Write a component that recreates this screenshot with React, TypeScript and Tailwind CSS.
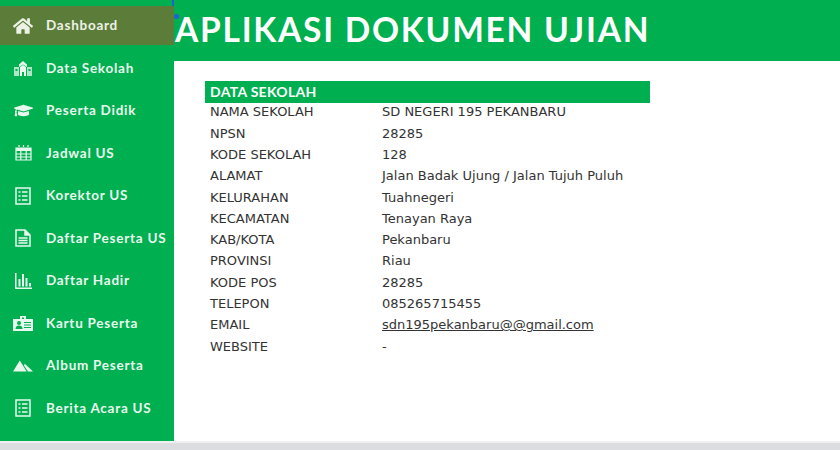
import React from "react";
import { FaHome, FaGraduationCap } from "react-icons/fa";

const ListIcon = ({ h = 18 }: { h?: number }) => (
  <svg width="16" height={h} viewBox={`0 0 16 ${h}`} fill="none" stroke="currentColor" strokeWidth="1.5">
    <rect x="1" y="1" width="14" height={h - 2} />
    <path d="M3.5 5h2M7 5h5.5M3.5 9h2M7 9h5.5M3.5 13h2M7 13h5.5" />
  </svg>
);

const SchoolIcon = () => (
  <svg width="18" height="15" viewBox="0 0 18 15" fill="currentColor">
    <path d="M9 0l4 3.5V6l-4-2.5L5 6V3.5z" />
    <path d="M6 6l3-2 3 2v9h-2v-4H8v4H6z" />
    <path d="M0 6h5v9H0zM13 6h5v9h-5z" opacity="0.75" />
    <path d="M1.5 8h2v2h-2zM14.5 8h2v2h-2z" fill="#00af50" />
  </svg>
);

const CalendarIcon = () => (
  <svg width="17" height="16" viewBox="0 0 17 16" fill="none" stroke="currentColor" strokeWidth="1.2">
    <path d="M1 3h15v12H1z" />
    <path d="M1 4.5h15" strokeWidth="3" />
    <path d="M4 0v2M8.500 0v2M13 0v2M1 9h15M1 12h15M5.800 6v9M11.200 6v9" />
  </svg>
);

const DocIcon = () => (
  <svg width="16" height="18" viewBox="0 0 16 18" fill="none" stroke="currentColor" strokeWidth="1.5">
    <path d="M1 1h9l5 5v11H1z" />
    <path d="M10 1v5h5" fill="currentColor" />
    <path d="M3.500 9h9M3.500 11.500h9M3.500 14h9" />
  </svg>
);

const BarsIcon = () => (
  <svg width="17" height="16" viewBox="0 0 17 16" fill="currentColor">
    <path d="M0 0h1.500v14.500H17V16H0z" />
    <path d="M3.500 6H5.500v7.500H3.500zM7 1h2v12.500H7zM10.500 5h2v8.500h-2zM14 10h2v3.500h-2z" />
  </svg>
);

const CardIcon = () => (
  <svg width="20" height="15" viewBox="0 0 20 15" fill="currentColor">
    <path d="M0 3h7V0h6v3h7v12H0z" />
    <path d="M9 1.500h2V3H9z" fill="#00af50" />
    <circle cx="6" cy="7" r="2" fill="#00af50" />
    <path d="M2.500 13c0-2.500 1.500-3.500 3.500-3.500s3.500 1 3.500 3.500z" fill="#00af50" />
    <path d="M11 6.500h7M11 9h7M11 11.500h7" stroke="#00af50" strokeWidth="1" />
  </svg>
);

const MountainIcon = () => (
  <svg width="22" height="12" viewBox="0 0 22 12" fill="currentColor">
    <path d="M0 12L7.500 0 15 12z" />
    <path d="M13 3.500L22 12h-5.500l-4.500-6.500z" />
  </svg>
);

const navItems = [
  { label: "Dashboard", icon: <FaHome size={20} />, active: true },
  { label: "Data Sekolah", icon: <SchoolIcon /> },
  { label: "Peserta Didik", icon: <FaGraduationCap size={19} /> },
  { label: "Jadwal US", icon: <CalendarIcon /> },
  { label: "Korektor US", icon: <ListIcon /> },
  { label: "Daftar Peserta US", icon: <DocIcon /> },
  { label: "Daftar Hadir", icon: <BarsIcon /> },
  { label: "Kartu Peserta", icon: <CardIcon /> },
  { label: "Album Peserta", icon: <MountainIcon /> },
  { label: "Berita Acara US", icon: <ListIcon h={18} /> },
];

const rows = [
  ["NAMA SEKOLAH", "SD NEGERI 195 PEKANBARU"],
  ["NPSN", "28285"],
  ["KODE SEKOLAH", "128"],
  ["ALAMAT", "Jalan Badak Ujung / Jalan Tujuh Puluh"],
  ["KELURAHAN", "Tuahnegeri"],
  ["KECAMATAN", "Tenayan Raya"],
  ["KAB/KOTA", "Pekanbaru"],
  ["PROVINSI", "Riau"],
  ["KODE POS", "28285"],
  ["TELEPON", "085265715455"],
  ["EMAIL", "sdn195pekanbaru@@gmail.com"],
  ["WEBSITE", "-"],
];

export default function App() {
  return (
    <div className="relative w-[840px] h-[450px] overflow-hidden flex flex-col bg-[#dcdde1] font-['Lato','Open_Sans',sans-serif]">
      <div className="flex h-[441px] shrink-0">
        <aside className="w-[174px] shrink-0 bg-[#00af50] pt-[6px] text-white">
          <ul>
            {navItems.map(item => (
              <li key={item.label} className="h-[42.5px]">
                <div className={`flex items-center h-[39px] pl-[13px] gap-[13px] text-[13.5px] font-bold tracking-[0.75px] whitespace-nowrap ${item.active ? "w-[175px] bg-[#5c7d3a] text-[#eef2e6]" : "text-[#e9f8ef]"}`}>
                  <span className="w-[20px] flex justify-center">{item.icon}</span>
                  <span>{item.label}</span>
                </div>
              </li>
            ))}
          </ul>
        </aside>
        <main className="flex-1 bg-white flex flex-col">
          <header className="h-[61px] bg-[#00af50] flex items-center pl-[1px] pb-[3px] text-white text-[33.5px] font-bold tracking-[1.75px] whitespace-nowrap">
            APLIKASI DOKUMEN UJIAN
          </header>
          <section className="pt-[20px] pl-[31px] text-[13px] text-[#333] font-['DejaVu_Sans',sans-serif]">
            <div className="w-[445px] h-[22px] bg-[#00af50] pl-[5px] pb-[2px] flex items-center text-white font-['Lato',sans-serif] font-bold text-[14px] tracking-[0.3px]">DATA SEKOLAH</div>
            <div className="-mt-[1.5px]">
              {rows.map(([label, value]) => (
                <div key={label} className="flex h-[21.3px] items-center pl-[5px] whitespace-nowrap">
                  <span className="w-[172px] shrink-0">{label}</span>
                  {label === "EMAIL" ? <a className="underline">{value}</a> : <span>{value}</span>}
                </div>
              ))}
            </div>
          </section>
        </main>
      </div>
      <div className="h-[2px] bg-[#f0f0f2]" />
      <span className="absolute left-[172px] top-0 w-[2px] h-[6px] bg-[#2060d0]" />
      <span className="absolute left-[174px] top-[14px] w-[5px] h-[5px] rounded-full bg-[#2060d0]" />
    </div>
  );
}
